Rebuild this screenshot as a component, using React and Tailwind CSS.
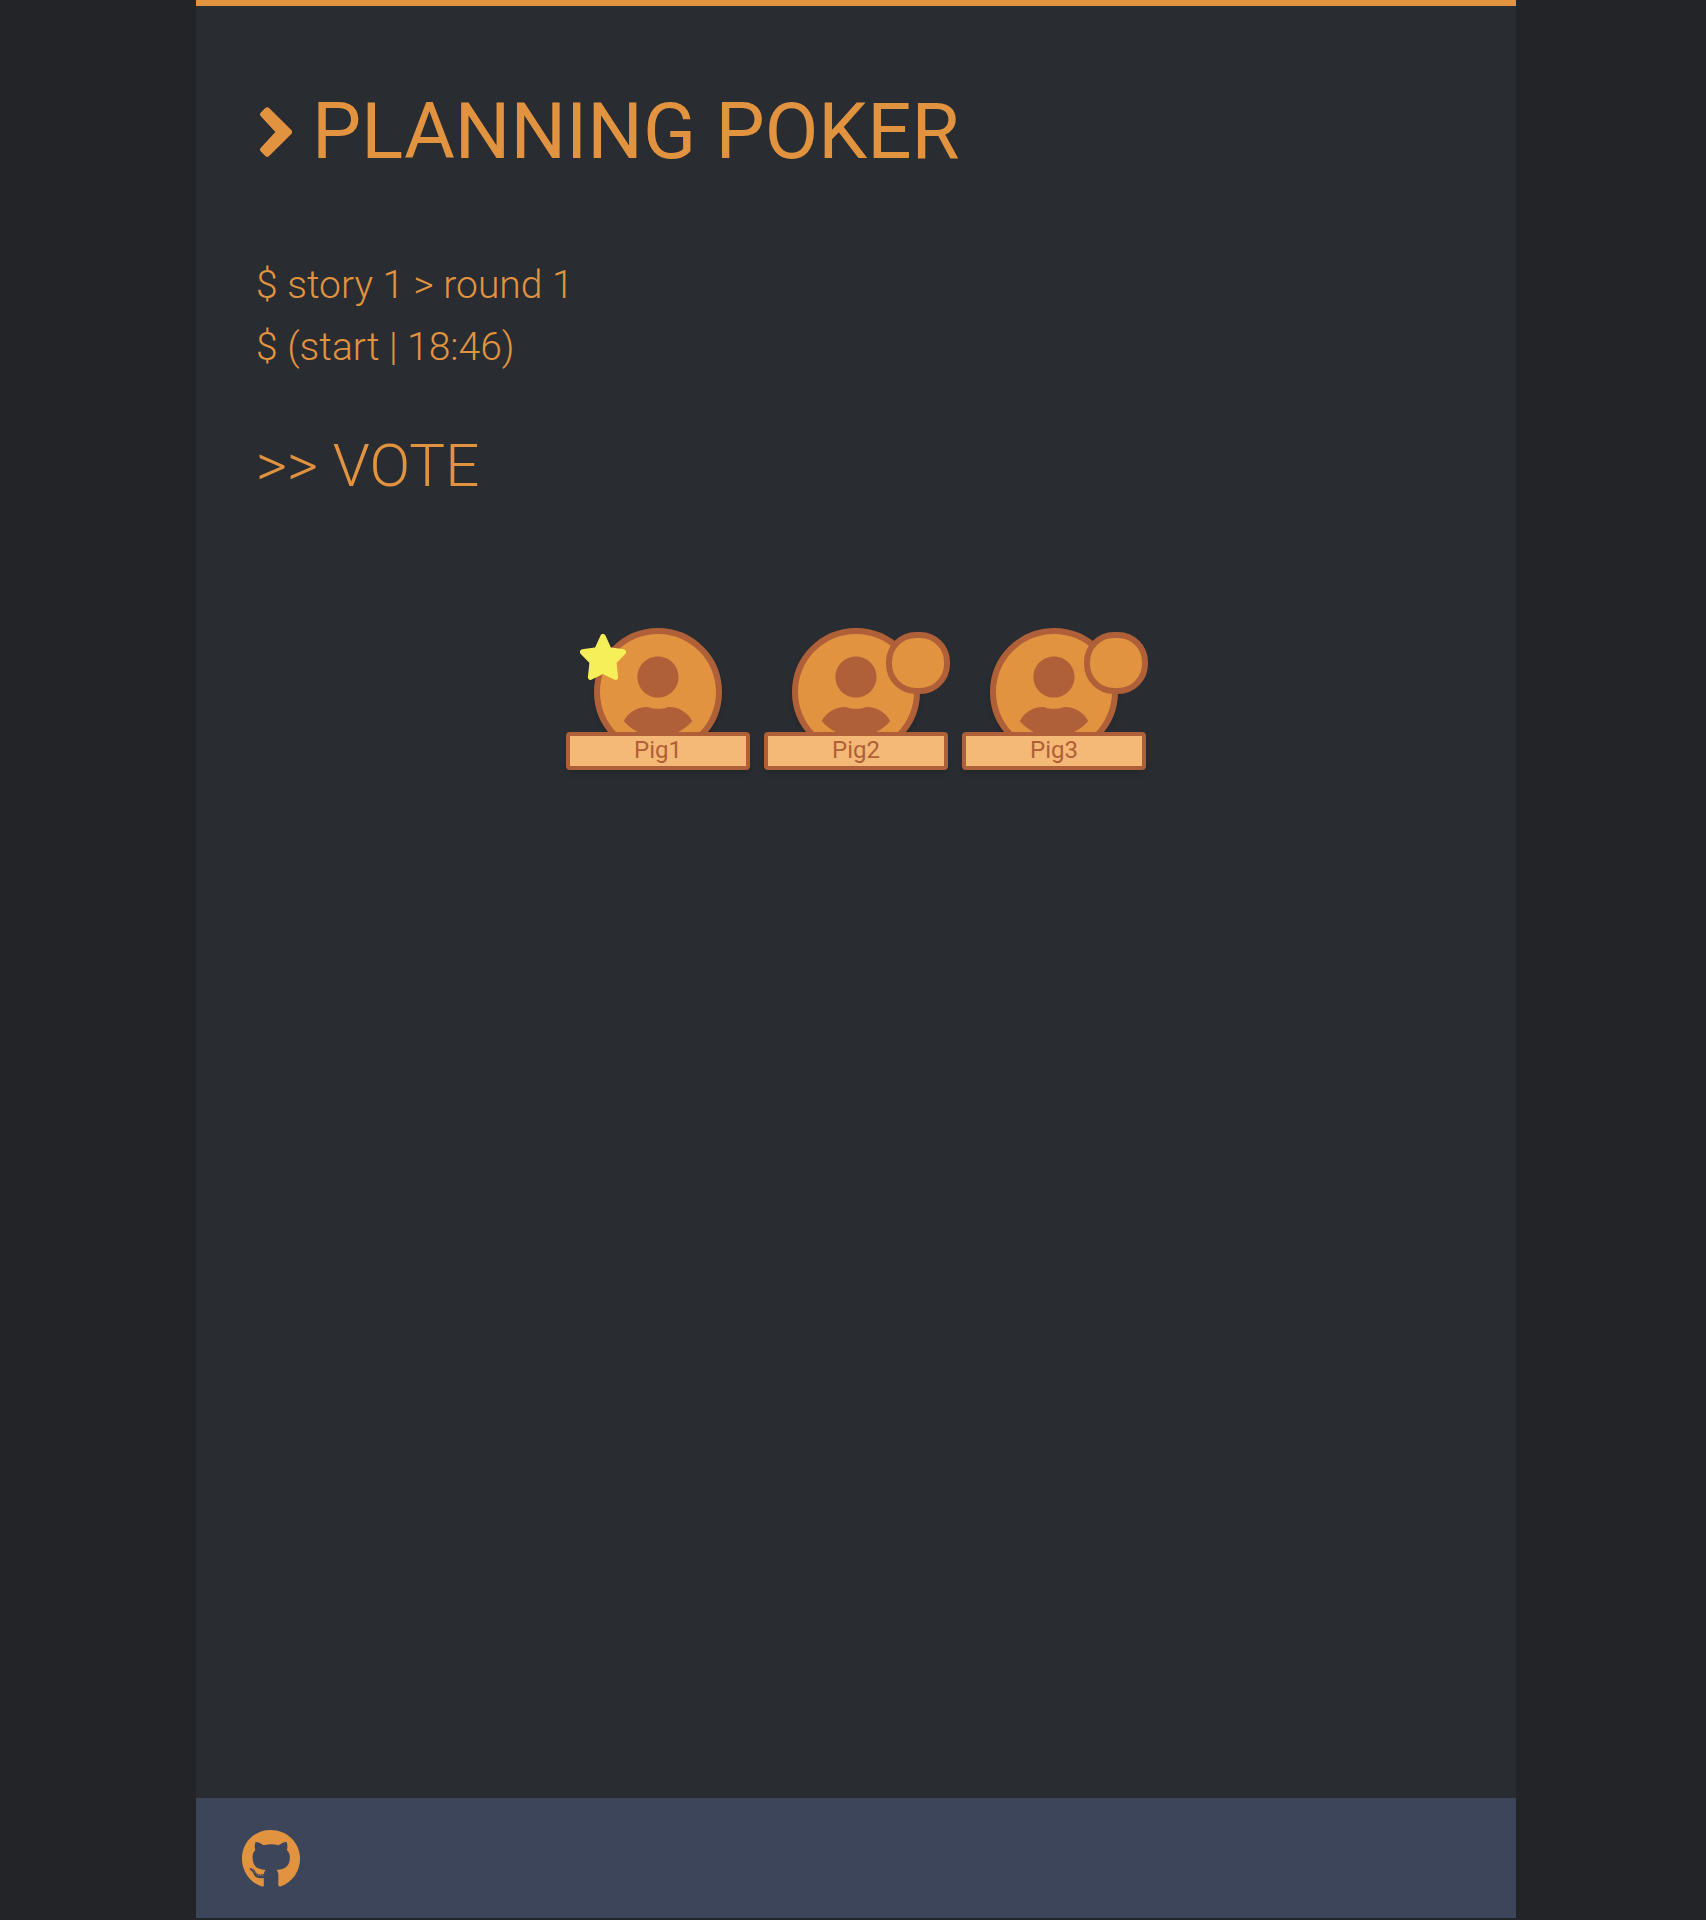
import React from "react";
import { FaGithub } from "react-icons/fa";

const players = [
  { name: "Pig1", leader: true },
  { name: "Pig2", leader: false },
  { name: "Pig3", leader: false },
];

function Chevron() {
  return (
    <svg viewBox="0 0 32 50" className="mr-5 ml-1 h-[50px] w-8" aria-hidden="true">
      <path
        d="M7.2 3 L2.8 7.4 L19 25 L2.8 42.6 L7.2 47 L29.4 25 Z"
        fill="currentColor"
        stroke="currentColor"
        strokeWidth="5.4"
        strokeLinejoin="round"
      />
    </svg>
  );
}

function Avatar() {
  return (
    <div className="size-32 rounded-full border-6 border-[#b06038] bg-[#b06038] shadow-md">
      <svg viewBox="0 8 496 496" className="size-full text-[#e29340]" fill="currentColor" aria-hidden="true">
        <path d="M248 8C111 8 0 119 0 256s111 248 248 248 248-111 248-248S385 8 248 8zm0 96c48.6 0 88 39.4 88 88s-39.4 88-88 88-88-39.4-88-88 39.4-88 88-88zm0 344c-58.7 0-111.3-26.6-146.5-68.2 18.8-35.4 55.6-59.8 98.5-59.8 2.4 0 4.8.4 7.1 1.1 13 4.2 26.6 6.9 40.9 6.9 14.3 0 28-2.7 40.9-6.9 2.3-.7 4.7-1.1 7.1-1.1 42.9 0 79.7 24.4 98.5 59.8C359.3 421.4 306.7 448 248 448z" />
      </svg>
    </div>
  );
}

function Star() {
  return (
    <svg viewBox="0 0 46 46" className="absolute top-1.5 left-3.5 size-[46px]" role="img" aria-label="Leader">
      <path
        d="M23 2.7 L29 15.8 L43.3 18 L33.8 27.8 L35.4 43.2 L23 37 L10.6 43.2 L12.2 27.8 L2.7 18 L17 15.8 Z"
        fill="#f7ef5a"
        stroke="#f7ef5a"
        strokeWidth="5.4"
        strokeLinejoin="round"
      />
    </svg>
  );
}

function Player({ name, leader }) {
  return (
    <li className="relative w-46">
      <div className="flex h-26 justify-center">
        <Avatar />
      </div>
      {leader ? (
        <Star />
      ) : (
        <span className="absolute top-1 -right-0.5 z-10 h-[62px] w-16 rounded-[30px] border-6 border-[#b06038] bg-[#e29340]" />
      )}
      <div className="relative h-[38px] rounded border-4 border-[#b06038] bg-[#f4b976] text-center text-2xl leading-7 text-[#b06038] shadow-md">
        {name}
      </div>
    </li>
  );
}

export default function App() {
  return (
    <div className="min-h-screen bg-[#222427] pb-0.5 pl-1.5 font-[Roboto,sans-serif] text-[#e29340]">
      <div className="mx-auto flex min-h-[calc(100vh-2px)] max-w-[1320px] flex-col border-t-6 border-[#e29340] bg-[#292c30]">
        <main className="grow px-15 pt-19">
          <h1 className="flex items-center text-[78px] leading-[100px] font-normal">
            <Chevron />
            PLANNING POKER
          </h1>
          <div className="mt-18 text-[39px] leading-[62px] font-light">
            <p>$ story 1 &gt; round 1</p>
            <p>$ (start | 18:46)</p>
          </div>
          <h2 className="mt-13 text-[60px] leading-[72px] font-light">&gt;&gt; VOTE</h2>
          <ul className="mt-[126px] flex flex-wrap justify-center gap-3.5">
            {players.map((player) => (
              <Player key={player.name} {...player} />
            ))}
          </ul>
        </main>
        <footer className="flex h-30 items-center bg-[#3d455a] px-[45px] pt-0.5">
          <a href="#github" aria-label="GitHub">
            <FaGithub className="size-15" />
          </a>
        </footer>
      </div>
    </div>
  );
}
